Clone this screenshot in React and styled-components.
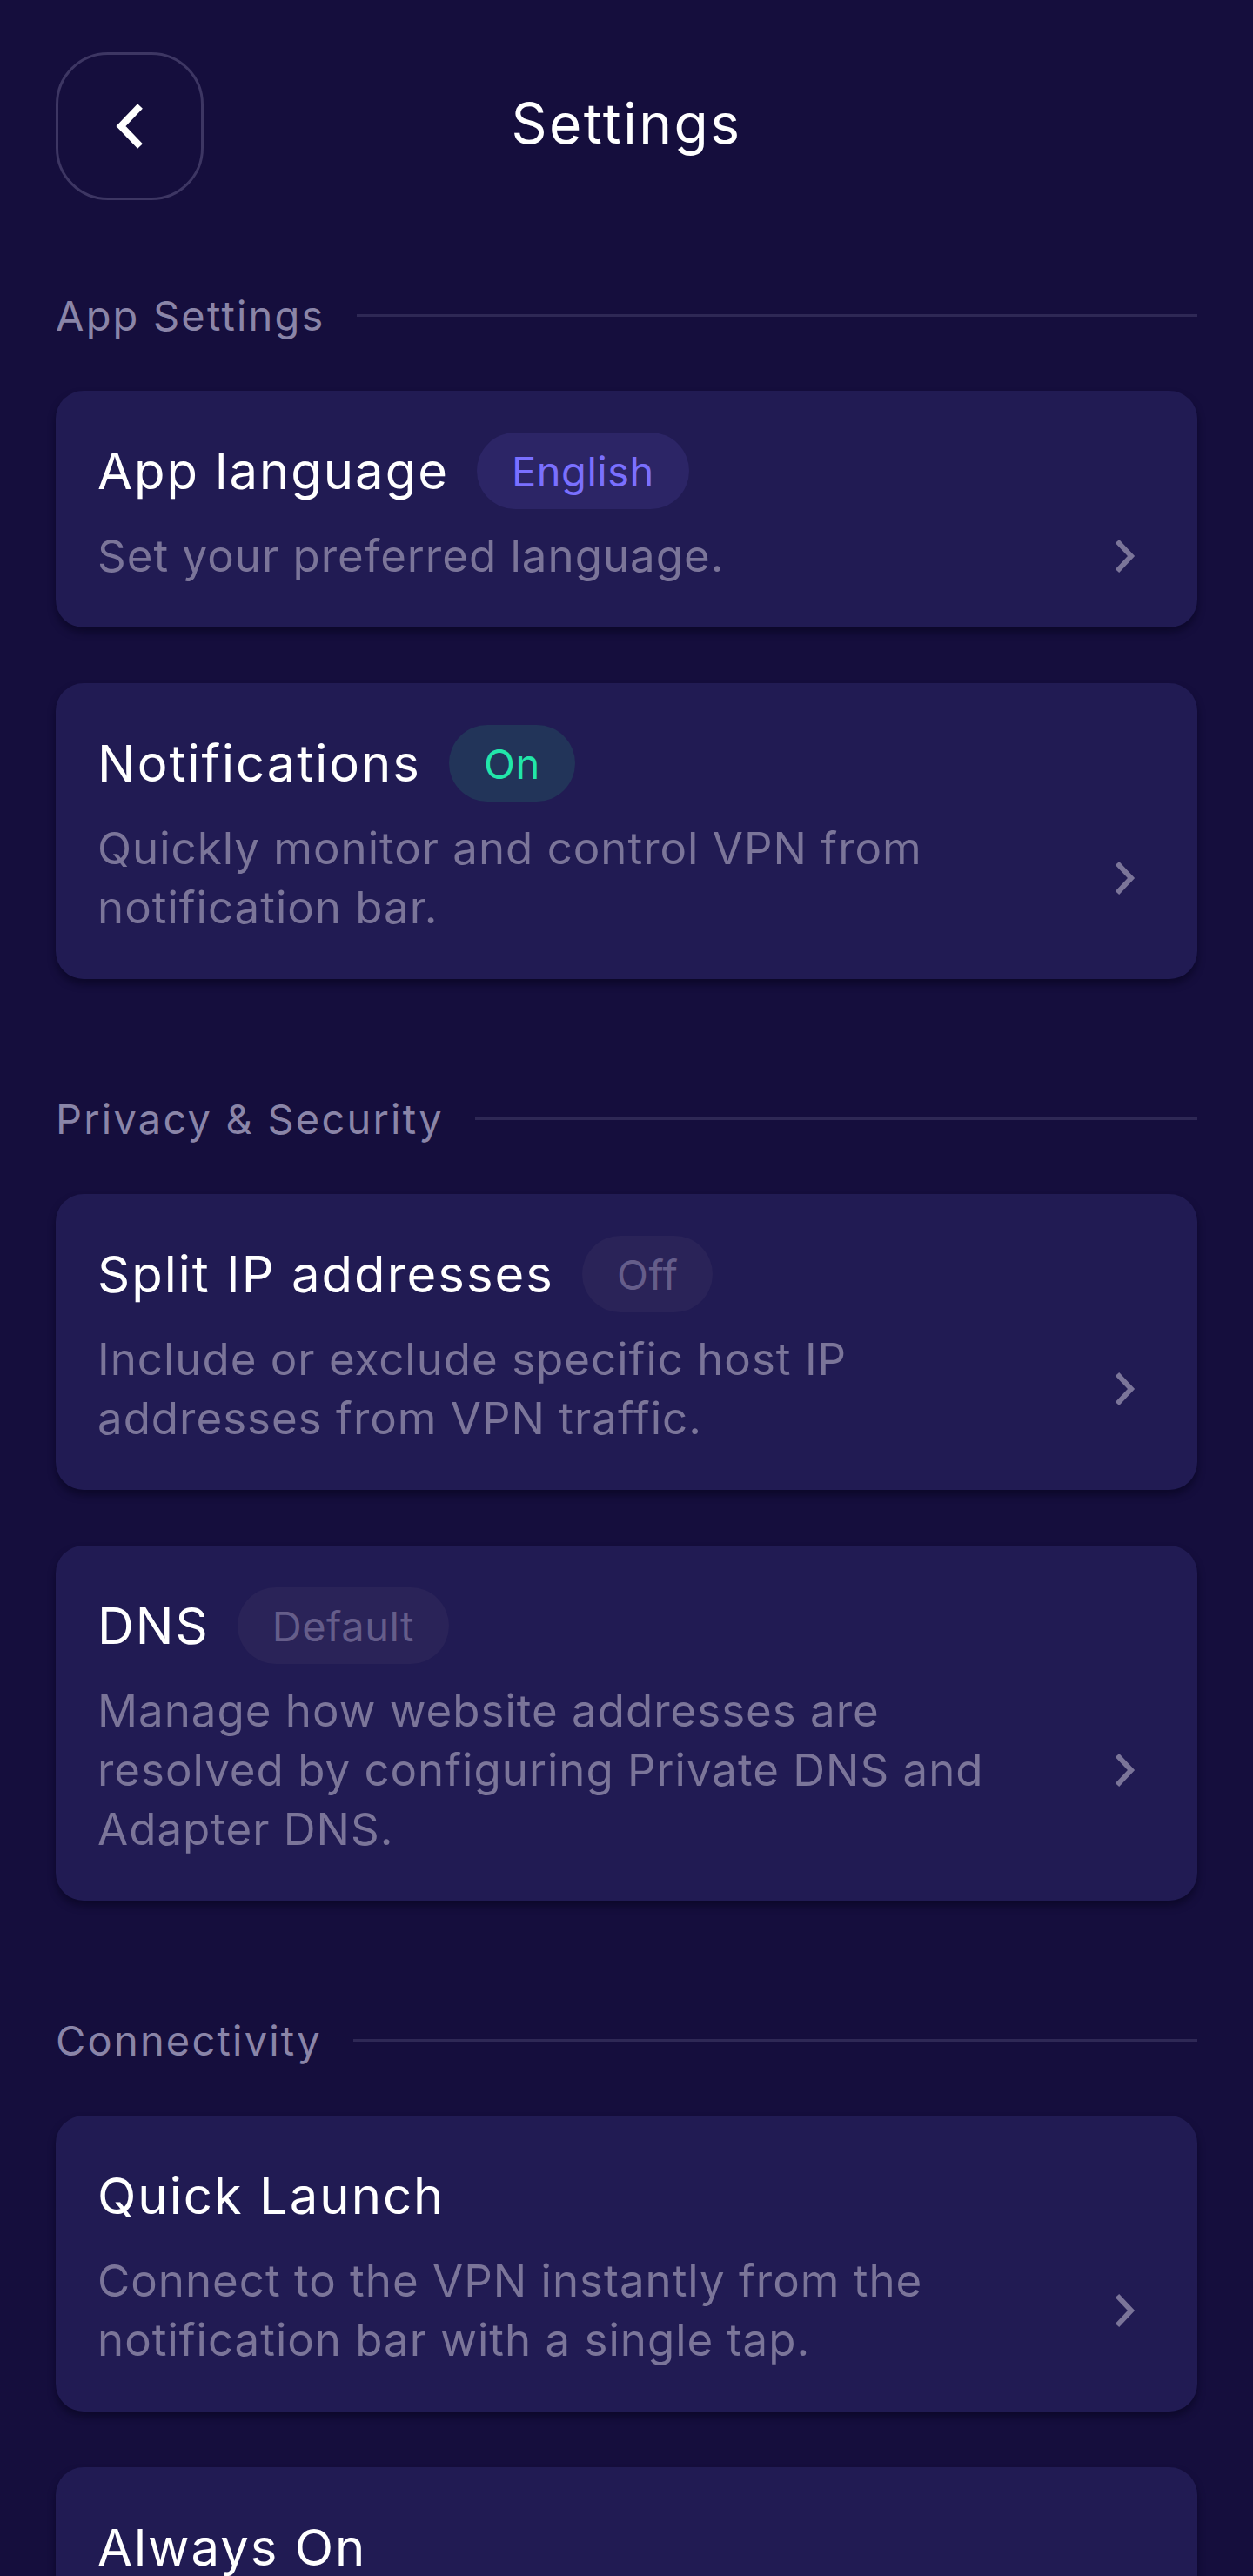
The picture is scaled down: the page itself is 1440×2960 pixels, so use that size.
import React from "react";
import styled, { createGlobalStyle } from "styled-components";

const GlobalStyle = createGlobalStyle`
  html, body {
    margin: 0;
    padding: 0;
    background: #150e3d;
  }
  * { box-sizing: border-box; }
`;

const Screen = styled.div`
  height: 100vh;
  overflow: hidden;
  background: #150e3d;
  font-family: Inter, "Open Sans", "Noto Sans", sans-serif;
  color: #ffffff;
  padding: 60px 64px 0;
`;

const Header = styled.header`
  display: grid;
  grid-template-columns: 170px 1fr 170px;
  align-items: center;
  height: 170px;
  margin-bottom: 100px;
`;

const BackButton = styled.button`
  width: 170px;
  height: 170px;
  border-radius: 60px;
  border: 3px solid #3d3663;
  background: transparent;
  display: flex;
  align-items: center;
  justify-content: center;
  padding: 0;
  cursor: pointer;
`;

const Title = styled.h1`
  margin: 0 0 8px;
  text-align: center;
  font-size: 64px;
  font-weight: 400;
  letter-spacing: 2.5px;
  color: #ffffff;
`;

const Sections = styled.div`
  display: flex;
  flex-direction: column;
  gap: 128px;
`;

const Section = styled.section`
  display: flex;
  flex-direction: column;
`;

const SectionHeader = styled.div`
  display: flex;
  align-items: center;
  gap: 36px;
  height: 64px;
  margin-bottom: 55px;
`;

const SectionLabel = styled.span`
  font-size: 47px;
  font-weight: 400;
  letter-spacing: 2.2px;
  color: #8a85a8;
  white-space: nowrap;
`;

const Rule = styled.div`
  flex: 1;
  height: 3px;
  background: #2e2855;
`;

const CardList = styled.div`
  display: flex;
  flex-direction: column;
  gap: 64px;
`;

const Card = styled.div`
  display: flex;
  flex-direction: column;
  gap: 20px;
  padding: 48px;
  border-radius: 32px;
  background: #211b53;
  box-shadow: 0 6px 8px rgba(6, 3, 28, 0.55);
`;

const TitleRow = styled.div`
  display: flex;
  align-items: center;
  gap: 32px;
  min-height: 88px;
`;

const CardTitle = styled.span`
  font-size: 58px;
  font-weight: 400;
  letter-spacing: 2px;
  color: #ffffff;
`;

const badgeColors = {
  accent: { bg: "#2c2566", fg: "#7a70ff" },
  success: { bg: "#223459", fg: "#22e6aa" },
  muted: { bg: "#2a2358", fg: "#655d8a" },
};

const Badge = styled.span`
  display: inline-flex;
  align-items: center;
  height: 88px;
  padding: 0 40px;
  border-radius: 44px;
  font-size: 47px;
  font-weight: 400;
  letter-spacing: 0.5px;
  background: ${(p) => badgeColors[p.$tone].bg};
  color: ${(p) => badgeColors[p.$tone].fg};
`;

const BodyRow = styled.div`
  display: flex;
  align-items: center;
  justify-content: space-between;
  gap: 40px;
`;

const Description = styled.p`
  margin: 0;
  max-width: 1060px;
  font-size: 51px;
  line-height: 68px;
  letter-spacing: 1px;
  font-weight: 400;
  color: #7b7599;
`;

const ChevronWrap = styled.span`
  display: flex;
  flex-shrink: 0;
  margin-right: 22px;
`;

const BackIcon = () => (
  <svg width="36" height="56" viewBox="0 0 36 56" aria-hidden="true">
    <polyline
      points="30,5 8,28 30,51"
      fill="none"
      stroke="#ffffff"
      strokeWidth="8"
      strokeLinejoin="miter"
    />
  </svg>
);

const Chevron = () => (
  <svg width="28" height="40" viewBox="0 0 28 40" aria-hidden="true">
    <polyline
      points="6,3 22,20 6,37"
      fill="none"
      stroke="#7b7599"
      strokeWidth="6"
      strokeLinejoin="miter"
    />
  </svg>
);

const sections = [
  {
    label: "App Settings",
    items: [
      { title: "App language", badge: "English", tone: "accent", desc: "Set your preferred language." },
      {
        title: "Notifications",
        badge: "On",
        tone: "success",
        desc: "Quickly monitor and control VPN from notification bar.",
      },
    ],
  },
  {
    label: "Privacy & Security",
    items: [
      {
        title: "Split IP addresses",
        badge: "Off",
        tone: "muted",
        desc: "Include or exclude specific host IP addresses from VPN traffic.",
      },
      {
        title: "DNS",
        badge: "Default",
        tone: "muted",
        desc: "Manage how website addresses are resolved by configuring Private DNS and Adapter DNS.",
      },
    ],
  },
  {
    label: "Connectivity",
    items: [
      {
        title: "Quick Launch",
        desc: "Connect to the VPN instantly from the notification bar with a single tap.",
      },
      { title: "Always On" },
    ],
  },
];

export default function App() {
  return (
    <>
      <GlobalStyle />
      <Screen>
        <Header>
          <BackButton aria-label="Back">
            <BackIcon />
          </BackButton>
          <Title>Settings</Title>
          <span />
        </Header>
        <Sections>
          {sections.map((s) => (
            <Section key={s.label}>
              <SectionHeader>
                <SectionLabel>{s.label}</SectionLabel>
                <Rule />
              </SectionHeader>
              <CardList>
                {s.items.map((it) => (
                  <Card key={it.title}>
                    <TitleRow>
                      <CardTitle>{it.title}</CardTitle>
                      {it.badge && <Badge $tone={it.tone}>{it.badge}</Badge>}
                    </TitleRow>
                    {it.desc && (
                      <BodyRow>
                        <Description>{it.desc}</Description>
                        <ChevronWrap>
                          <Chevron />
                        </ChevronWrap>
                      </BodyRow>
                    )}
                  </Card>
                ))}
              </CardList>
            </Section>
          ))}
        </Sections>
      </Screen>
    </>
  );
}
